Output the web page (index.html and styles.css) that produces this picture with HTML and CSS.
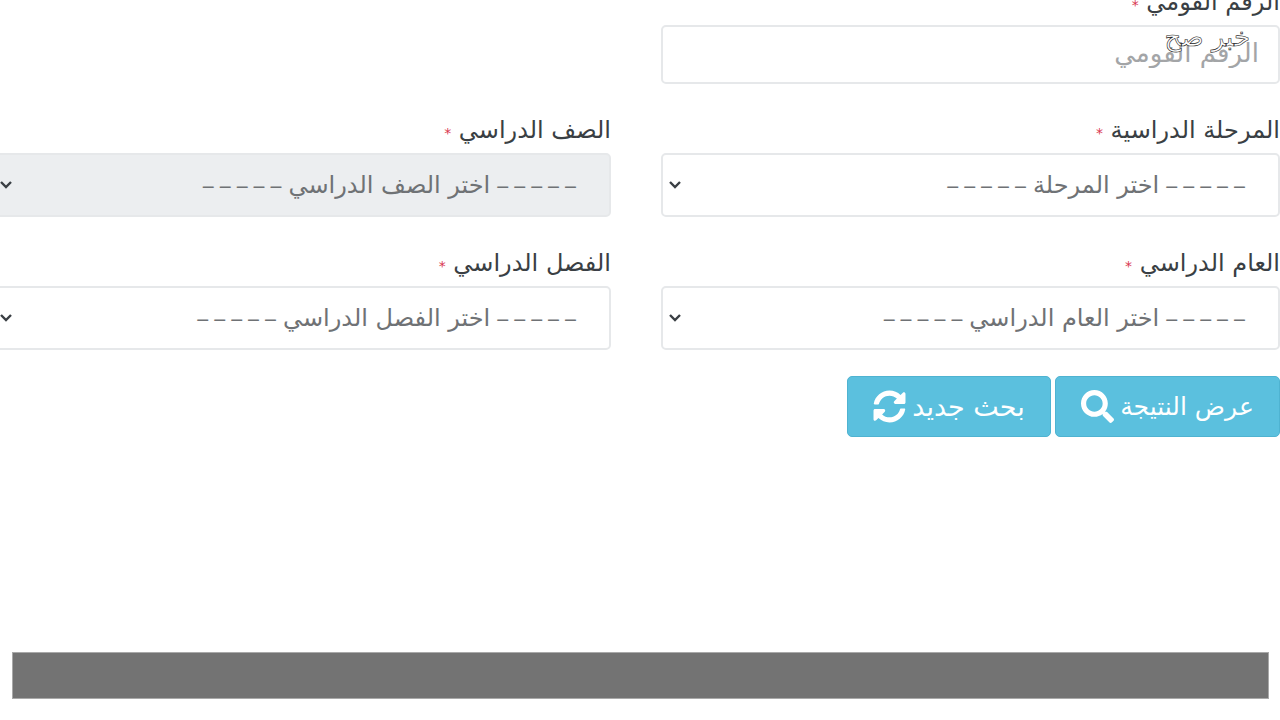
FILE: index.html
```html
<!DOCTYPE html>
<html lang="ar" dir="rtl">
<head>
    <meta charset="UTF-8">
    <meta name="viewport" content="width=device-width, initial-scale=1.0">
    <title>نتيجة الطالب</title>
    <link rel="stylesheet" href="styles.css">
</head>
<body>
    <div class="watermark">خبر صح</div>

    <form class="result-form">
        <div class="form-grid">
            <div class="field">
                <label>الرقم القومي <span class="req">*</span></label>
                <input type="text" class="control" placeholder="الرقم القومي">
            </div>
            <div class="field"></div>

            <div class="field">
                <label>المرحلة الدراسية <span class="req">*</span></label>
                <div class="control select">
                    <span class="dash">-----</span><span>اختر المرحلة</span><span class="dash">-----</span>
                    <svg class="chevron" viewBox="0 0 14 10"><path d="M2 2l5 5 5-5"/></svg>
                </div>
            </div>
            <div class="field">
                <label>الصف الدراسي <span class="req">*</span></label>
                <div class="control select disabled">
                    <span class="dash">-----</span><span>اختر الصف الدراسي</span><span class="dash">-----</span>
                    <svg class="chevron" viewBox="0 0 14 10"><path d="M2 2l5 5 5-5"/></svg>
                </div>
            </div>

            <div class="field">
                <label>العام الدراسي <span class="req">*</span></label>
                <div class="control select">
                    <span class="dash">-----</span><span>اختر العام الدراسي</span><span class="dash">-----</span>
                    <svg class="chevron" viewBox="0 0 14 10"><path d="M2 2l5 5 5-5"/></svg>
                </div>
            </div>
            <div class="field">
                <label>الفصل الدراسي <span class="req">*</span></label>
                <div class="control select">
                    <span class="dash">-----</span><span>اختر الفصل الدراسي</span><span class="dash">-----</span>
                    <svg class="chevron" viewBox="0 0 14 10"><path d="M2 2l5 5 5-5"/></svg>
                </div>
            </div>
        </div>

        <div class="actions">
            <button type="button" class="btn btn-show">
                عرض النتيجة
                <svg class="btn-icon" viewBox="0 0 512 512"><path d="M505 442.7L405.3 343c-4.5-4.5-10.6-7-17-7H372c27.6-35.3 44-79.7 44-128C416 93.1 322.9 0 208 0S0 93.1 0 208s93.1 208 208 208c48.3 0 92.7-16.4 128-44v16.3c0 6.4 2.5 12.5 7 17l99.7 99.7c9.4 9.4 24.6 9.4 33.9 0l28.3-28.3c9.4-9.4 9.4-24.6.1-34zM208 336c-70.7 0-128-57.2-128-128 0-70.7 57.2-128 128-128 70.7 0 128 57.2 128 128 0 70.7-57.2 128-128 128z"/></svg>
            </button>
            <button type="button" class="btn btn-new">
                بحث جديد
                <svg class="btn-icon" viewBox="0 0 512 512"><path d="M370.72 133.28C339.458 104.008 298.888 87.962 255.848 88c-77.458.068-144.328 53.178-162.791 126.85-1.344 5.363-6.122 9.15-11.651 9.15H24.103c-7.498 0-13.194-6.807-11.807-14.176C33.933 94.924 134.813 8 256 8c66.448 0 126.791 26.136 171.315 68.685L463.03 40.97C478.149 25.851 504 36.559 504 57.941V192c0 13.255-10.745 24-24 24H345.941c-21.382 0-32.09-25.851-16.971-40.971l41.75-41.749zM32 296h134.059c21.382 0 32.09 25.851 16.971 40.971l-41.75 41.75c31.262 29.273 71.835 45.319 114.876 45.28 77.418-.07 144.315-53.144 162.787-126.849 1.344-5.363 6.122-9.15 11.651-9.15h57.304c7.498 0 13.194 6.807 11.807 14.176C478.067 417.076 377.187 504 256 504c-66.448 0-126.791-26.136-171.315-68.685L48.97 471.03C33.851 486.149 8 475.441 8 454.059V320c0-13.255 10.745-24 24-24z"/></svg>
            </button>
        </div>
    </form>

    <div class="footer-bar"></div>
</body>
</html>
```

FILE: styles.css
```css
* {
    box-sizing: border-box;
}
html, body {
    height: 720px;
    overflow: hidden;
}
body {
    margin: 0;
    background: #fff;
    color: #3a3f44;
    font-family: "DejaVu Sans", "Noto Sans", sans-serif;
}
.watermark {
    position: absolute;
    top: 19px;
    right: 30px;
    font-size: 26px;
    line-height: 36px;
    color: #fff;
    -webkit-text-stroke: 0.6px #222;
}
.result-form {
    width: 1288px;
    margin-top: -13px;
    margin-left: -8px;
}
.form-grid {
    display: grid;
    grid-template-columns: 619px 619px;
    column-gap: 50px;
    row-gap: 31px;
}
.field label {
    display: block;
    height: 38px;
    font-size: 24px;
    line-height: 30px;
    white-space: nowrap;
}
.req {
    color: #d9364f;
    font-size: 14px;
}
.control {
    display: block;
    width: 100%;
    background: #fff;
    border: 2px solid #e6e8ea;
    border-radius: 5px;
    color: #6f7275;
    font-family: inherit;
    font-size: 24px;
}
input.control {
    height: 59px;
    padding: 0 19px 4px;
    font-size: 26px;
}
input.control::placeholder {
    color: #a3a5a7;
}
.select {
    position: relative;
    display: flex;
    align-items: center;
    gap: 4px;
    height: 64px;
    padding: 0 30px 0 40px;
}
.select.disabled {
    background: #eceef0;
}
.dash {
    font-family: Inter, sans-serif;
    font-size: 38px;
    font-weight: 200;
    line-height: 1;
}
.chevron {
    position: absolute;
    left: 5px;
    top: 25px;
    width: 14px;
    height: 10px;
    fill: none;
    stroke: #3a3f44;
    stroke-width: 2.4;
}
.actions {
    display: flex;
    gap: 4px;
    margin-top: 26px;
    padding-left: 8px;
}
.btn {
    display: flex;
    align-items: center;
    justify-content: center;
    gap: 6px;
    height: 61px;
    padding: 0;
    background: #5bc0de;
    border: 1px solid #4fb3d1;
    border-radius: 5px;
    color: #fff;
    font-family: inherit;
    font-size: 25px;
    white-space: nowrap;
    cursor: pointer;
}
.btn-show {
    width: 225px;
}
.btn-new {
    width: 204px;
    font-size: 27px;
}
.btn-icon {
    width: 33px;
    height: 33px;
    fill: #fff;
}
.footer-bar {
    position: absolute;
    top: 652px;
    left: 12px;
    width: 1257px;
    height: 47px;
    background: #737373;
    border: 1px solid #a9a9a9;
}
```
